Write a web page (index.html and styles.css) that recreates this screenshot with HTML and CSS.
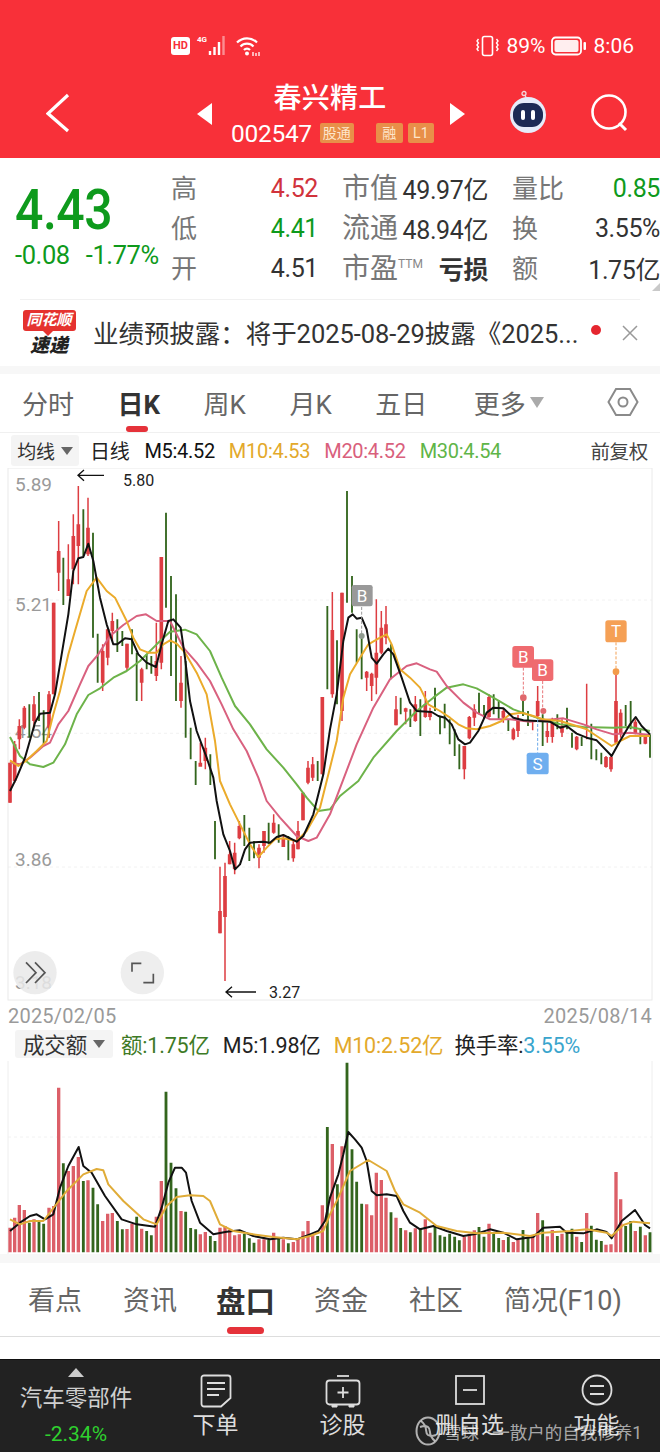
FILE: index.html
```html
<!DOCTYPE html>
<html lang="zh">
<head>
<meta charset="utf-8">
<title>春兴精工</title>
<link rel="stylesheet" href="styles.css">
</head>
<body>
<div class="page">
  <header class="hero">
    <div class="status">
      <span class="hd">HD</span>
      <svg class="sig" width="32" height="22" viewBox="0 0 32 22"><text x="1" y="8" class="sig-t">4G</text><path d="M14 21v-4M18.500 21v-8M23 21v-13" stroke="#fff" stroke-width="2.400" fill="none"/><path d="M27.500 21V2" stroke="#fff" stroke-opacity=".45" stroke-width="2.400" fill="none"/></svg>
      <svg class="wifi" width="24" height="22" viewBox="0 0 24 22"><g fill="none" stroke="#fff" stroke-width="2.200"><path d="M1 7.500a14 14 0 0 1 20 0"/><path d="M4.500 11.500a9 9 0 0 1 13 0"/><path d="M8 15a4 4 0 0 1 6 0"/></g><circle cx="11" cy="18.500" r="2" fill="#fff"/><path d="M17 21v-4M20 21v-3M23 21v-4" stroke="#fff" stroke-width="1.300"/></svg>
      <span class="grow"></span>
      <svg class="vib" width="23" height="22" viewBox="0 0 23 22"><rect x="6.500" y="1.500" width="10" height="19" rx="2" fill="none" stroke="#fff" stroke-width="1.600"/><path d="M2.500 4l-1.500 2 1.500 2-1.500 2 1.500 2-1.500 2 1.500 2M20.500 4l1.500 2-1.500 2 1.500 2-1.500 2 1.500 2-1.500 2" fill="none" stroke="#fff" stroke-width="1.400"/></svg>
      <span class="st-t pct">89%</span>
      <svg class="batt" width="36" height="20" viewBox="0 0 36 20"><rect x="1" y="1.500" width="29" height="17" rx="3.500" fill="none" stroke="#fff" stroke-width="1.800"/><rect x="3.500" y="4" width="24" height="12" rx="2" fill="#fff" fill-opacity=".92"/><rect x="32.500" y="6" width="2.500" height="8" rx="1" fill="#fff"/></svg>
      <span class="st-t clock">8:06</span>
    </div>
    <div class="nav">
      <svg class="back" width="24" height="40" viewBox="0 0 24 40"><path d="M22 2 2 20.500 22 38" fill="none" stroke="#fff" stroke-width="3.200"/></svg>
      <span class="tri tri-l"></span>
      <div class="stock">
        <div class="stock-name">春兴精工</div>
        <div class="stock-sub"><span class="code">002547</span><span class="tag tag-a">股通</span><span class="tag tag-b">融</span><span class="tag tag-c">L1</span></div>
      </div>
      <span class="tri tri-r"></span>
      <svg class="robot" width="44" height="44" viewBox="0 0 44 44"><circle cx="18" cy="3.500" r="2" fill="none" stroke="#f3d8dc" stroke-width="1.300"/><path d="M19 5l2 5" stroke="#f3d8dc" stroke-width="1.300"/><circle cx="22" cy="25" r="18" fill="#e6ecfa"/><rect x="7" y="13" width="30" height="24" rx="11" fill="#1c2a55"/><rect x="15" y="20" width="4" height="10" rx="2" fill="#fff"/><rect x="25" y="20" width="4" height="10" rx="2" fill="#fff"/></svg>
      <svg class="search" width="38" height="38" viewBox="0 0 38 38"><circle cx="18" cy="18" r="16.500" fill="none" stroke="#fff" stroke-width="2.600"/><path d="M28 29l7 7" stroke="#fff" stroke-width="3"/></svg>
    </div>
  </header>

  <section class="quote">
    <div class="price-box">
      <div class="price">4.43</div>
      <div class="chg"><span>-0.08</span><span>-1.77%</span></div>
    </div>
    <div class="qgrid">
      <span class="ql">高</span><span class="qv red">4.52</span><span class="ql">市值</span><span class="qv dark">49.97亿</span><span class="ql">量比</span><span class="qv green">0.85</span>
      <span class="ql">低</span><span class="qv green">4.41</span><span class="ql">流通</span><span class="qv dark">48.94亿</span><span class="ql">换</span><span class="qv dark">3.55%</span>
      <span class="ql">开</span><span class="qv dark">4.51</span><span class="ql ql-ttm">市盈<sup>TTM</sup></span><span class="qv dark loss">亏损</span><span class="ql">额</span><span class="qv dark">1.75亿</span>
    </div>
    <span class="corner"></span>
  </section>
  <div class="hr"></div>

  <section class="news">
    <div class="logo">
      <span class="logo-top">同花顺</span>
      <span class="logo-bot">速递</span>
    </div>
    <div class="news-text">业绩预披露：将于2025-08-29披露《2025...</div>
    <span class="dot"></span>
    <svg class="close" width="18" height="18" viewBox="0 0 18 18"><path d="M2 2l14 14M16 2 2 16" stroke="#999" stroke-width="1.500"/></svg>
  </section>
  <div class="band band-a"></div>

  <nav class="ktabs">
    <span>分时</span><span class="on">日K<i></i></span><span>周K</span><span>月K</span><span>五日</span><span class="more">更多<b></b></span>
    <svg class="hex" width="32" height="32" viewBox="0 0 32 32"><path d="M9 3h14l7.500 13L23 29H9L1.500 16z" fill="none" stroke="#8a8a8a" stroke-width="2"/><circle cx="16" cy="16" r="4.500" fill="none" stroke="#8a8a8a" stroke-width="2"/></svg>
  </nav>

  <div class="ma-row">
    <span class="chip">均线<b></b></span>
    <span class="m-day">日线</span>
    <span class="m5">M5:4.52</span>
    <span class="m10">M10:4.53</span>
    <span class="m20">M20:4.52</span>
    <span class="m30">M30:4.54</span>
    <span class="fq">前复权</span>
  </div>

  <svg class="kchart" width="660" height="533" viewBox="0 -39 1980 1599">
    <rect x="24" y="-39" width="1932" height="1596" fill="none" stroke="#eaeaea" stroke-width="3"/>
    <path d="M24 357H1956M24 757H1956M24 1158H1956" stroke="#ececec" stroke-width="2" stroke-dasharray="9 9"/>
    <g class="axis">
      <text x="45" y="30">5.89</text>
      <text x="45" y="390">5.21</text>
      <text x="45" y="772">4.54</text>
      <text x="45" y="1155">3.86</text>
      <text x="45" y="1524">3.18</text>
    </g>
    <g fill="none">
      <path class="w-r" d="M30 845V965M44 780V905M58 715V805M73 675V745M102 645V740M147 630V770M161 365V640M176 120V330M205 190V345M220 100V310M235 15V310M264 50V225M308 490V630M323 445V553M337 395V480M381 488V570M425 560V660M469 425V600M484 228V565M543 525V680M601 785V855M616 770V865M660 1157V1357M675 1145V1500M689 1080V1150M704 1085V1180M718 1020V1075M777 1090V1162M792 1050V1115M821 1000V1058M850 1060V1098M880 1080V1142M894 1020V1105M909 935V1018M924 840V910M938 828V900M967 648V880"/>
      <path class="b-r" d="M30 845V965M44 790V900M58 735V775M73 680V740M102 670V720M147 640V740M161 365V640M176 210V275M205 295V345M220 165V265M235 130V195M264 140V220M308 510V605M323 445V530M337 420V450M381 488V560M425 565V605M469 540V585M484 228V545M543 605V660M601 845V857M616 800V840M660 1290V1357M675 1185V1308M689 1120V1150M704 1115V1165M718 1035V1072M777 1100V1130M792 1050V1095M821 1025V1055M850 1072V1098M880 1090V1132M894 1050V1105M909 935V1018M924 860V905M938 850V890M967 648V880"/>
      <path class="w-g" d="M88 670V770M117 633V720M131 688V790M190 230V372M250 85V225M279 155V470M293 458V605M352 415V513M367 450V495M396 445V520M410 515V660M440 520V565M454 525V578M498 95V380M513 285V585M528 340V660M557 540V770M572 740V835M587 840V912M631 820V912M645 1020V1135M733 1002V1095M748 1040V1140M762 1080V1132M806 1025V1090M836 1030V1085M865 1065V1138M953 840V900M982 375V625"/>
      <g transform="translate(990 0)">
        <path class="w-r" d="M7 333V650M36 335V720M110 570V630M125 575V660M139 355V640M154 390V520M168 375V490M198 645V733M227 680V730M256 645V722M286 630V710M300 680V718M403 795V895M418 705V775M433 670V735M477 640V710M520 683V725M550 740V778M564 702V768M608 718V748M623 615V708M652 725V785M667 710V785M696 715V768M740 765V808M770 608V775M828 825V860M843 825V872M858 572V790M872 685V770M916 715V760M946 765V790"/>
        <path class="b-r" d="M7 447V640M36 335V690M110 572V590M125 578V615M139 515V590M154 440V515M168 430V470M198 685V733M227 682V692M256 670V720M286 670V708M300 690V708M403 795V865M418 708V772M433 685V710M477 648V708M520 690V710M550 745V775M564 715V750M623 660V705M652 750V768M667 725V768M696 735V755M740 767V805M828 828V858M843 828V865M858 660V785M872 695V760M916 722V758M946 768V788"/>
        <path class="w-g" d="M21 478V670M51 30V365M66 285V395M80 445V545M95 470V595M183 490V595M212 650V700M241 685V738M271 655V765M315 620V690M330 707V760M344 668V742M359 715V790M374 745V825M388 790V865M447 635V700M462 672V712M491 640V700M506 658V715M535 715V750M579 650V705M594 690V735M638 700V795M682 700V745M711 680V745M726 755V800M755 768V795M784 728V835M799 805V838M814 815V850M887 672V735M902 660V745M931 745V790M960 760V830"/>
      </g>
      <polyline class="l-g" points="30,768 60,825 90,850 130,858 160,845 195,790 230,700 265,642 300,622 340,590 380,570 420,540 470,490 510,452 555,446 590,460 630,510 665,590 705,675 750,730 800,805 850,860 890,910 920,950 955,990 990,985 1020,945 1075,900 1120,830 1190,750 1250,690 1300,650 1340,620 1390,610 1430,622 1480,650 1540,685 1610,710 1680,730 1750,738 1840,740 1890,738 1950,750"/>
      <polyline class="l-p" points="30,845 60,850 90,830 130,795 150,785 175,730 205,690 240,610 265,555 295,520 330,465 370,432 410,405 438,400 470,420 510,420 550,500 590,545 630,600 665,670 700,745 740,810 775,890 800,960 840,1010 890,1065 925,1080 950,1070 990,1000 1030,895 1070,790 1120,680 1170,595 1220,555 1250,547 1290,565 1310,572 1340,615 1390,665 1430,695 1470,715 1530,715 1590,722 1630,718 1690,712 1750,730 1790,745 1840,760 1890,755 1950,762"/>
      <polyline class="l-o" points="30,838 55,855 80,838 110,810 140,780 160,700 180,630 205,520 225,450 260,330 290,290 320,330 345,350 380,420 400,470 420,505 445,515 470,515 490,490 510,478 530,488 555,515 590,575 620,640 645,780 660,900 690,970 720,1030 750,1090 775,1128 800,1100 825,1075 850,1072 890,1080 920,1050 960,980 990,860 1010,780 1030,650 1050,580 1080,530 1105,490 1140,470 1160,460 1175,490 1200,565 1230,590 1260,620 1285,670 1320,690 1350,710 1375,730 1400,742 1430,745 1470,735 1505,720 1530,700 1565,695 1600,705 1630,715 1680,720 1730,735 1760,745 1790,765 1835,795 1860,780 1890,765 1920,765 1950,765"/>
      <polyline class="l-k" points="30,930 50,890 75,830 105,725 120,698 150,695 165,640 190,490 205,400 220,270 235,232 250,228 265,188 280,240 300,350 320,430 340,490 352,490 375,472 395,475 415,520 440,545 468,558 485,490 505,420 520,415 542,440 555,530 570,660 590,750 620,830 640,890 650,960 670,1060 690,1110 705,1165 720,1150 735,1105 750,1085 790,1082 810,1085 830,1068 850,1062 890,1082 910,1065 940,1000 970,880 990,745 1010,640 1030,480 1045,410 1058,400 1070,413 1085,410 1100,445 1115,530 1130,548 1150,520 1165,503 1180,520 1205,590 1230,665 1250,690 1295,693 1315,705 1335,710 1355,730 1375,775 1395,790 1410,785 1435,750 1460,695 1480,680 1510,682 1540,710 1570,718 1610,720 1650,722 1680,740 1700,735 1730,758 1760,770 1790,778 1835,825 1860,780 1890,730 1907,708 1925,735 1950,760"/>
    </g>
    <g transform="translate(990 0)">
      <path d="M95 378V465" stroke="#999" stroke-width="3" stroke-dasharray="9 5"/><circle cx="95" cy="465" r="9" fill="#8f9a8f"/>
      <path d="M580 560V650" stroke="#e8767a" stroke-width="3" stroke-dasharray="9 5"/><circle cx="580" cy="650" r="10" fill="#e0686c"/>
      <path d="M638 600V690" stroke="#e8767a" stroke-width="3" stroke-dasharray="9 5"/><circle cx="640" cy="690" r="9" fill="#e0686c"/>
      <path d="M623 715V815" stroke="#6aa9ea" stroke-width="3" stroke-dasharray="9 5"/>
      <path d="M858 484V572" stroke="#f3a055" stroke-width="3" stroke-dasharray="9 5"/><circle cx="858" cy="572" r="10" fill="#f39b4a"/>
      <rect x="65" y="312" width="63" height="64" rx="7" fill="#999"/>
      <rect x="547" y="495" width="65" height="65" rx="8" fill="#ef6b6f"/>
      <rect x="606" y="535" width="64" height="65" rx="8" fill="#ef6b6f"/>
      <rect x="590" y="815" width="66" height="65" rx="8" fill="#6faeef"/>
      <rect x="826" y="418" width="64" height="66" rx="8" fill="#f5a055"/>
      <g class="pin">
        <text x="96" y="362">B</text>
        <text x="580" y="545">B</text>
        <text x="638" y="585">B</text>
        <text x="623" y="866">S</text>
        <text x="858" y="468">T</text>
      </g>
    </g>
    <path d="M312 -17H234M252 -33 234 -17 252 -1" fill="none" stroke="#111" stroke-width="4"/>
    <text class="mark" x="369" y="15">5.80</text>
    <path d="M768 1533H678M696 1517 678 1533 696 1549" fill="none" stroke="#111" stroke-width="4"/>
    <text class="mark" x="807" y="1551">3.27</text>
    <g class="round-btn">
      <circle cx="105" cy="1475" r="65" fill="#e9e9e9" fill-opacity=".85"/>
      <path d="M78 1444 108 1475 78 1506M105 1444 135 1475 105 1506" fill="none" stroke="#555" stroke-width="5"/>
      <circle cx="427" cy="1475" r="65" fill="#eeeeee"/>
      <path d="M396 1472V1447H424M460 1478V1505H430" fill="none" stroke="#555" stroke-width="5"/>
    </g>
  </svg>

  <div class="dates"><span>2025/02/05</span><span>2025/08/14</span></div>

  <div class="vol-row">
    <span class="chip chip-v">成交额<b></b></span>
    <span class="v-g">额:1.75亿</span>
    <span class="v-k">M5:1.98亿</span>
    <span class="v-o">M10:2.52亿</span>
    <span class="v-k v-t">换手率:<em>3.55%</em></span>
  </div>

  <svg class="vchart" width="660" height="193" viewBox="0 30 1980 579">
    <path d="M24 30V609M1956 30V609" stroke="#eeeeee" stroke-width="3"/>
    <path d="M24 258H1956" stroke="#ececec" stroke-width="2" stroke-dasharray="9 9"/>
    <g fill="none">
      <path class="vb-r" d="M30 530V604M44 500V604M58 462V604M73 477V604M102 505V604M147 470V604M161 465V604M176 110V604M205 360V604M220 345V604M235 318V604M264 388V604M308 510V604M323 488V604M337 486V604M381 534V604M396 518V604M425 533V604M469 497V604M484 390V604M543 480V604M601 550V604M616 543V604M660 530V604M675 525V604M689 537V604M704 553V604M718 550V604M777 565V604M792 565V604M821 545V604M850 565V604M880 573V604M894 565V604M909 541V604M924 510V604M938 550V604M967 463V604"/>
      <path class="vb-g" d="M88 515V604M117 510V604M131 518V604M190 337V604M250 390V604M279 410V604M293 460V604M352 510V604M367 535V604M410 497V604M440 540V604M454 553V604M498 122V604M513 335V604M528 412V604M557 482V604M572 531V604M587 535V604M631 555V604M645 570V604M733 548V604M748 562V604M762 575V604M806 567V604M836 562V604M865 577V604M953 555V604M982 228V604"/>
      <g transform="translate(990 0)">
        <path class="vb-r" d="M7 279V604M36 286V604M110 460V604M125 493V604M139 365V604M154 387V604M168 440V604M198 500V604M227 538V604M256 532V604M286 505V604M300 545V604M403 557V604M418 548V604M433 538V604M477 518V604M520 567V604M550 573V604M564 565V604M608 557V604M623 486V604M652 556V604M667 537V604M696 548V604M740 557V604M770 486V604M828 581V604M843 580V604M858 363V604M872 445V604M916 540V604M946 553V604"/>
        <path class="vb-g" d="M22 400V604M51 35V604M66 295V604M80 392V604M95 458V604M183 484V604M212 531V604M241 544V604M271 532V604M315 528V604M330 553V604M344 557V604M359 548V604M374 557V604M388 568V604M447 528V604M462 557V604M491 548V604M506 561V604M535 558V604M579 537V604M594 560V604M638 508V604M682 555V604M711 545V604M726 533V604M755 573V604M784 524V604M799 566V604M814 570V604M887 525V604M902 510V604M931 527V604M960 544V604"/>
      </g>
      <polyline class="l-k" points="30,540 60,515 90,495 110,490 135,505 160,490 180,410 205,345 236,288 250,345 275,365 315,435 365,505 410,520 465,527 485,470 505,395 525,350 545,350 558,365 575,450 600,515 640,550 680,542 720,538 760,555 810,565 850,560 890,565 930,550 955,540 975,510 990,440 1015,370 1030,310 1045,243 1065,265 1085,290 1100,330 1115,420 1130,433 1160,430 1190,435 1210,480 1230,515 1260,535 1300,525 1340,540 1390,555 1430,548 1470,535 1510,545 1550,565 1600,558 1630,530 1680,527 1700,545 1750,547 1790,535 1820,543 1835,562 1865,510 1905,477 1935,522 1950,532"/>
      <polyline class="l-o2" points="30,505 60,520 90,510 130,510 165,465 200,420 250,370 290,354 310,358 325,400 370,450 430,505 470,520 500,465 530,438 570,433 610,435 630,450 660,520 700,540 760,550 820,558 890,565 930,555 970,540 990,490 1015,440 1050,360 1105,327 1160,360 1185,420 1210,460 1260,485 1310,525 1370,540 1430,547 1510,545 1590,555 1630,545 1710,540 1760,535 1820,545 1835,555 1870,522 1900,512 1950,517"/>
    </g>
  </svg>
  <div class="band band-b"></div>

  <nav class="btabs">
    <span>看点</span><span>资讯</span><span class="on">盘口<i></i></span><span>资金</span><span>社区</span><span>简况(F10)</span>
  </nav>
  <div class="gap"></div>

  <footer class="bar">
    <div class="sector">
      <span class="up"></span>
      <span class="sector-name">汽车零部件</span>
      <span class="sector-pct">-2.34%</span>
    </div>
    <div class="act">
      <svg width="32" height="34" viewBox="0 0 32 34"><path d="M4 1.500h24a2.500 2.500 0 0 1 2.500 2.500v20L21 32.500H4A2.500 2.500 0 0 1 1.500 30V4A2.500 2.500 0 0 1 4 1.500z" fill="none" stroke="#ddd" stroke-width="1.800"/><path d="M7 9h18M7 15h18M7 21h12" stroke="#ddd" stroke-width="1.800"/></svg>
      <span>下单</span>
    </div>
    <div class="act">
      <svg width="36" height="34" viewBox="0 0 36 34"><path d="M12 2h12" stroke="#ddd" stroke-width="1.800"/><rect x="1.500" y="6.500" width="33" height="24" rx="3" fill="none" stroke="#ddd" stroke-width="1.800"/><path d="M18 13v11M12.500 18.500h11" stroke="#ddd" stroke-width="1.800"/><path d="M7 31v2h5v-2M24 31v2h5v-2" fill="#ddd" stroke="#ddd"/></svg>
      <span>诊股</span>
    </div>
    <div class="act">
      <svg width="30" height="34" viewBox="0 0 30 34"><rect x="1" y="2" width="28" height="28" fill="none" stroke="#ddd" stroke-width="1.800"/><path d="M8 16h14" stroke="#ddd" stroke-width="1.800"/></svg>
      <span>删自选</span>
    </div>
    <div class="act">
      <svg width="32" height="34" viewBox="0 0 32 34"><circle cx="16" cy="16" r="14.500" fill="none" stroke="#ddd" stroke-width="1.800"/><path d="M9 12h14M9 20h14" stroke="#ddd" stroke-width="1.800"/></svg>
      <span>功能</span>
    </div>
    <div class="wm">
      <svg width="26" height="30" viewBox="0 0 26 30"><g fill="none" stroke="#fff" stroke-opacity=".65" stroke-width="2"><ellipse cx="13" cy="15" rx="11.500" ry="13.500"/><path d="M6 5c8 6 3 11 7 14 3 2 5 1 8 0M20 25c-8-6-3-11-7-14-3-2-5-1-8 0"/></g></svg>
      <span>雪球 · 一散户的自我修养1</span>
    </div>
  </footer>
</div>
</body>
</html>
```
FILE: styles.css
```css
* { box-sizing: border-box; }
html, body { margin: 0; padding: 0; background: #fff; }
body { font-family: Roboto, "Noto Sans CJK SC", sans-serif; }
.page { position: relative; width: 660px; height: 1452px; overflow: hidden; background: #fff; }

/* header */
.hero { height: 158px; background: #f83039; color: #fff; }
.status { padding: 35px 26px 0 171px; display: flex; align-items: center; height: 57px; }
.hd { width: 19px; height: 18px; background: #fff; color: #f83039; border-radius: 3px; font: 700 11px/18px Roboto, sans-serif; text-align: center; }
.sig { margin-left: 6px; margin-top: -2px; }
.sig-t { font: 700 8px Roboto, sans-serif; fill: #fff; }
.wifi { margin-left: 8px; }
.grow { flex: 1; }
.st-t { font-size: 21px; color: #fff; }
.pct { margin-left: 8px; }
.batt { margin-left: 5px; }
.clock { margin-left: 7px; }
.nav { height: 101px; padding: 0; display: flex; align-items: flex-start; }
.back { margin: 36px 0 0 46px; }
.tri { width: 0; height: 0; margin-top: 46px; border-top: 11px solid transparent; border-bottom: 11px solid transparent; }
.tri-l { margin-left: 127px; border-right: 15px solid #fff; }
.tri-r { border-left: 15px solid #fff; }
.stock { width: 238px; display: flex; flex-direction: column; align-items: center; }
.stock-name { margin: 25px 2px 0 0; font-size: 28px; line-height: 34px; font-weight: 500; letter-spacing: .2px; }
.stock-sub { width: 100%; padding-left: 19px; display: flex; align-items: center; height: 30px; margin-top: 2px; }
.code { font-size: 24.500px; letter-spacing: -.3px; }
.tag { margin-left: 8px; height: 20px; background: #e88f49; color: #fde6cb; font-size: 14px; line-height: 20px; text-align: center; border-radius: 2px; }
.tag-a { width: 34px; }
.tag-b { width: 27px; margin-left: 22px; }
.tag-c { width: 26px; margin-left: 5px; }
.robot { margin: 33px 0 0 41px; }
.search { margin: 37px 0 0 41px; }

/* quote */
.quote { position: relative; height: 141px; display: flex; }
.price-box { width: 171px; padding: 24px 0 0 15px; }
.price { font-size: 50px; line-height: 56px; font-weight: 500; color: #0e9a1c; letter-spacing: -.5px; transform-origin: left center; transform: scaleY(1.1); }
.chg { display: flex; gap: 16px; margin-top: 4px; font-size: 25.500px; line-height: 26px; color: #0e9a1c; white-space: nowrap; letter-spacing: -.4px; }
.qgrid { flex: 1; padding-top: 10px; display: grid; grid-template-columns: 87px 60px 24px 56px 90px 24px 68px 80px; grid-template-rows: repeat(3, 40px); align-items: center; white-space: nowrap; }
.ql { font-size: 26px; color: #777; margin-bottom: 4px; }
.qv { font-size: 25px; text-align: right; letter-spacing: -.4px; }
.qgrid .ql:nth-child(6n+3) { grid-column: 4; font-size: 28px; }
.qgrid .ql:nth-child(6n+5) { grid-column: 7; }
.red { color: #d1333c; }
.green { color: #0e9a1c; }
.dark { color: #333; }
.loss { font-weight: 700; font-size: 25px; }
.ql-ttm sup { font-size: 12px; vertical-align: 10px; line-height: 0; color: #888; }
.corner { position: absolute; right: 0; top: 125px; border-left: 8px solid transparent; border-bottom: 8px solid #c9c9c9; }
.hr { height: 1px; margin: 0 20px; background: #f1f1f1; }

/* news */
.news { height: 66px; display: flex; align-items: center; padding-left: 22px; }
.logo { width: 54px; display: flex; flex-direction: column; align-items: center; }
.logo-top { position: relative; width: 53px; height: 21px; background: #e5322f; border-radius: 3px; color: #fff; font-size: 15px; line-height: 21px; font-weight: 700; font-style: italic; text-align: center; }
.logo-top::after { content: ""; position: absolute; left: 20px; top: 21px; border-top: 5px solid #e5322f; border-left: 5px solid transparent; border-right: 5px solid transparent; }
.logo-bot { margin-top: 4px; color: #222; font-size: 19px; line-height: 22px; font-weight: 900; font-style: italic; }
.news-text { margin: 0 0 4px 17px; width: 497px; font-size: 25.500px; color: #333; white-space: nowrap; letter-spacing: -.05px; }
.dot { width: 10px; height: 10px; margin-left: 1px; margin-top: -6px; border-radius: 50%; background: #e5262f; }
.close { margin-left: 20px; }
.band { background: #f7f7f7; }
.band-a { height: 8px; }

/* k tabs */
.ktabs { position: relative; height: 59px; padding: 0 0 2px 22px; display: flex; align-items: center; gap: 43.500px; font-size: 26px; color: #666; border-bottom: 1px solid #f0f0f0; white-space: nowrap; }
.ktabs > * { flex: none; }
.ktabs .on { position: relative; color: #333; font-weight: 700; }
.ktabs .on i { position: absolute; left: 8px; top: 42px; width: 22px; height: 6px; border-radius: 3px; background: #e5323a; }
.more { margin-left: 3px; display: flex; align-items: center; }
.more b { margin: 0 0 0 4px; border-top: 11px solid #aaa; border-left: 7px solid transparent; border-right: 7px solid transparent; }
.hex { margin-left: 20px; }

/* MA row */
.ma-row { height: 35px; display: flex; align-items: center; padding-left: 11px; font-size: 20px; color: #111; white-space: nowrap; letter-spacing: -.3px; }
.chip { width: 68px; height: 31px; background: #f4f4f4; border-radius: 3px; display: flex; align-items: center; justify-content: center; color: #333; font-size: 19px; }
.chip b { margin-left: 6px; border-top: 8px solid #666; border-left: 6px solid transparent; border-right: 6px solid transparent; }
.m-day { margin-left: 11px; color: #222; }
.m5 { margin-left: 15px; }
.m10 { margin-left: 14px; color: #e3a92b; }
.m20 { margin-left: 14px; color: #d9607c; }
.m30 { margin-left: 14px; color: #5fb548; }
.fq { margin-left: auto; margin-right: 12px; color: #444; font-size: 19.500px; }

/* charts */
.kchart, .vchart { display: block; }
.axis text { font: 400 57px Roboto, sans-serif; fill: #9a9a9a; }
.mark { font: 400 48px Roboto, sans-serif; fill: #222; }
.pin text { font: 400 51px Roboto, sans-serif; fill: #fff; text-anchor: middle; }
.w-r { stroke: #dd3d42; stroke-width: 4.500; }
.b-r { stroke: #dd3d42; stroke-width: 11; }
.w-g { stroke: #33651d; stroke-width: 5.500; }
.vb-r { stroke: #dc5f68; stroke-width: 10; }
.vb-g { stroke: #33651d; stroke-width: 8.500; }
.l-k { stroke: #111; stroke-width: 6; stroke-linejoin: round; }
.l-o { stroke: #ebab2b; stroke-width: 6; stroke-linejoin: round; }
.l-o2 { stroke: #e0ac38; stroke-width: 6; stroke-linejoin: round; }
.l-p { stroke: #d9617f; stroke-width: 6; stroke-linejoin: round; }
.l-g { stroke: #6db34a; stroke-width: 6; stroke-linejoin: round; }

.dates { height: 30px; padding: 0 8px; display: flex; align-items: center; justify-content: space-between; color: #9a9a9a; font-size: 20px; letter-spacing: .2px; }
.vol-row { height: 30px; padding: 0 0 5px 15px; display: flex; align-items: center; font-size: 21.500px; white-space: nowrap; letter-spacing: -.2px; }
.chip-v { width: 98px; height: 28px; font-size: 21.500px; color: #333; }
.v-g { margin-left: 8px; color: #3e7a26; }
.v-k { margin-left: 13px; color: #222; }
.v-o { margin-left: 13px; color: #e3a92b; }
.v-t { margin-left: 11px; }
.v-t em { font-style: normal; color: #3aa5cd; }
.band-b { height: 9px; }

/* bottom tabs */
.btabs { height: 74px; padding: 0 0 2px 28px; display: flex; align-items: center; gap: 41px; font-size: 27px; color: #666; border-bottom: 1px solid #ddd; white-space: nowrap; }
.btabs .on { position: relative; margin: 0 -2px; color: #333; font-weight: 700; font-size: 29.500px; }
.btabs .on i { position: absolute; left: 11px; top: 49px; width: 37px; height: 7px; border-radius: 4px; background: #e5323a; }
.gap { height: 22px; }

/* bottom bar */
.bar { position: relative; height: 94px; background: #222; border-top: 1px solid #111; display: grid; grid-template-columns: 152px repeat(4, 127px); color: #ddd; }
.sector { position: relative; display: flex; flex-direction: column; align-items: center; padding-top: 8px; }
.up { border-bottom: 9px solid #ccc; border-left: 8px solid transparent; border-right: 8px solid transparent; }
.sector-name { margin-top: 6px; font-size: 22.500px; line-height: 30px; color: #cfcfcf; }
.sector-pct { margin-top: 7px; font-size: 21px; line-height: 28px; color: #2fd02f; }
.act { display: flex; flex-direction: column; align-items: center; padding-top: 14px; }
.act span { margin-top: 3px; font-size: 23px; line-height: 30px; color: #ddd; }
.wm { position: absolute; left: 415px; top: 56px; display: flex; align-items: center; gap: 3px; font-size: 17.500px; color: rgba(255,255,255,.62); white-space: nowrap; }
```
